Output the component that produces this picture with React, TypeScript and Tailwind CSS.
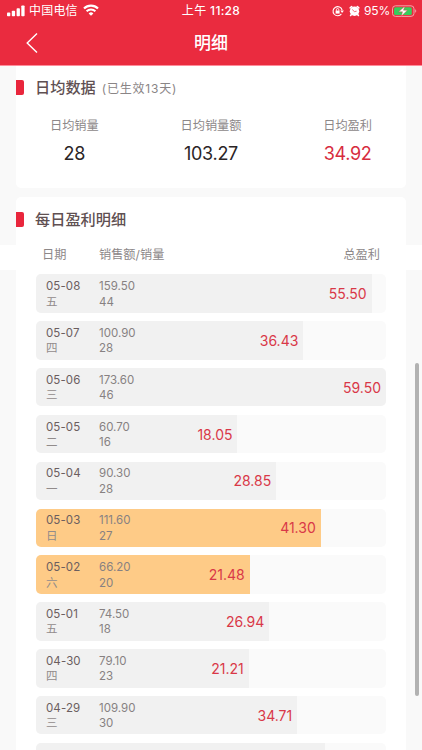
import clsx from "clsx";

type DayRow = {
  date: string;
  weekday: string;
  sales: string;
  count: number;
  profit: string;
  weekend?: boolean;
};

const days: DayRow[] = [
  { date: "05-08", weekday: "五", sales: "159.50", count: 44, profit: "55.50" },
  { date: "05-07", weekday: "四", sales: "100.90", count: 28, profit: "36.43" },
  { date: "05-06", weekday: "三", sales: "173.60", count: 46, profit: "59.50" },
  { date: "05-05", weekday: "二", sales: "60.70", count: 16, profit: "18.05" },
  { date: "05-04", weekday: "一", sales: "90.30", count: 28, profit: "28.85" },
  { date: "05-03", weekday: "日", sales: "111.60", count: 27, profit: "41.30", weekend: true },
  { date: "05-02", weekday: "六", sales: "66.20", count: 20, profit: "21.48", weekend: true },
  { date: "05-01", weekday: "五", sales: "74.50", count: 18, profit: "26.94" },
  { date: "04-30", weekday: "四", sales: "79.10", count: 23, profit: "21.21" },
  { date: "04-29", weekday: "三", sales: "109.90", count: 30, profit: "34.71" },
];

const summary = [
  { label: "日均销量", value: "28" },
  { label: "日均销量额", value: "103.27" },
  { label: "日均盈利", value: "34.92", red: true },
];

// the shortest bar still has to leave room for the date and sales columns
const barWidth = (profit: number) => 136.8 + profit * 3.583;

function StatusBar() {
  return (
    <div className="relative flex h-5 items-center justify-between pl-[7px] pr-[5px] text-[12px] leading-5">
      <div className="flex h-5 items-center">
        <svg className="mt-px" width="18" height="12" viewBox="0 0 18 12" fill="#fff">
          <rect x="0" y="7.6" width="3.3" height="3.6" rx="0.8" />
          <rect x="4.8" y="5.8" width="3.3" height="5.4" rx="0.8" />
          <rect x="9.6" y="3.3" width="3.3" height="7.9" rx="0.8" />
          <rect x="14.3" y="0.4" width="3.3" height="10.8" rx="0.8" />
        </svg>
        <span className="ml-[4px] mt-[2px] tracking-[0.2px]">中国电信</span>
        <svg className="ml-[5px]" width="16" height="12" viewBox="0 0 16 12" fill="none" stroke="#fff">
          <path d="M1 4.5a10 10 0 0 1 14 0" strokeWidth="2.2" />
          <path d="M3.6 7.3a6.3 6.3 0 0 1 8.8 0" strokeWidth="2" />
          <path d="M8 11.8 5.6 9.4a3.4 3.4 0 0 1 4.8 0Z" fill="#fff" stroke="none" />
        </svg>
      </div>
      <div className="absolute inset-x-0 top-px text-center tracking-[0.3px]">
        上午 <span className="font-medium">11:28</span>
      </div>
      <div className="flex h-5 items-center">
        <svg className="mt-px" width="12" height="12" viewBox="0 0 12 12" fill="none" stroke="#fff">
          <path d="M9.4 8.9A4.6 4.6 0 1 1 10.1 5" strokeWidth="1.1" />
          <path d="M8.3 5.4h3.6L10.1 8Z" fill="#fff" stroke="none" />
          <rect x="3.6" y="5.6" width="4" height="3" fill="#fff" stroke="none" />
          <path d="M4.4 5.8V4.7a1.2 1.2 0 0 1 2.4 0v1.1" strokeWidth="0.9" />
        </svg>
        <svg className="ml-[5px] mt-px" width="11" height="12" viewBox="0 0 11 12">
          <circle cx="5.5" cy="6.2" r="4.7" fill="#fff" />
          <path d="M1.2 2.9 2.7 1.5M9.8 2.9 8.3 1.5M2.2 9.7l-.6.8M8.8 9.7l.6.8" stroke="#fff" strokeWidth="1.6" strokeLinecap="round" />
          <path d="M3.2 4.5 5.4 6.6 7.6 6.2" stroke="#ea2b3f" strokeWidth="0.7" fill="none" />
        </svg>
        <span className="ml-[4px] mt-[2px] tracking-[-0.2px]">95%</span>
        <svg className="ml-[2px] mt-px" width="25" height="12" viewBox="0 0 25 12">
          <rect x="0.5" y="0.8" width="21.5" height="10.6" rx="3" fill="none" stroke="#f7a0a9" />
          <rect x="2" y="2.3" width="17.8" height="7.6" rx="1.5" fill="#37cd5c" />
          <path d="M23.2 4.3v3.4c1.4-.6 1.4-2.8 0-3.4Z" fill="#f7a0a9" />
          <path d="M12.8 1.2 6.6 6.8h3.9L9.3 11.2l6.1-6h-3.9Z" fill="#fff" stroke="#ea2b3f" strokeWidth="0.4" />
        </svg>
      </div>
    </div>
  );
}

function SectionTitle({ title, note }: { title: string; note?: string }) {
  return (
    <div className="flex h-[22px] items-center">
      <span className="h-[15px] w-2 rounded-r-[2px] bg-[#e9263c]" />
      <h2 className="ml-[11px] mt-px text-[15.2px] font-medium leading-[22px] text-[#5f5052]">{title}</h2>
      {note && (
        <span className="ml-[6px] mt-[4px] text-[12px] tracking-[0.8px] text-[#8a8586]">{note}</span>
      )}
    </div>
  );
}

function ProfitRow({ day }: { day: DayRow }) {
  return (
    <div className="h-[38.5px] shrink-0 overflow-hidden rounded-[5px] bg-[#fafafa]">
      <div
        className={clsx(
          "flex h-full items-center pl-[10px] pr-[5px]",
          day.weekend ? "bg-[#fecb87]" : "bg-[#f1f1f1]"
        )}
        style={{ width: barWidth(Number(day.profit)) }}
      >
        <div className="w-[53px] pt-[2px] text-[11.5px] leading-[15.5px]">
          <p className="tracking-[0.1px] text-[#6b5e5f]">{day.date}</p>
          <p className="text-[#918b8b]">{day.weekday}</p>
        </div>
        <div className="pt-[2px] text-[11.5px] leading-[15.5px] text-[#878182]">
          <p>{day.sales}</p>
          <p>{day.count}</p>
        </div>
        <span className="ml-auto text-[14px] text-[#d93848]">{day.profit}</span>
      </div>
    </div>
  );
}

export default function App() {
  return (
    <div className="relative h-[750px] w-[422px] overflow-hidden bg-[#f9f9f9] font-['Inter','Noto_Sans_CJK_SC',sans-serif]">
      <header className="h-[66px] border-b border-[#ff8c9b] bg-[#ea2b3f] text-white">
        <StatusBar />
        <div className="grid h-[45px] grid-cols-[1fr_auto_1fr] items-center">
          <svg className="ml-[26px]" width="12" height="20" viewBox="0 0 12 20" fill="none" stroke="#fff" strokeWidth="1.4">
            <path d="M11 .6 1.2 10 11 19.4" />
          </svg>
          <h1 className="pt-[3px] text-[17px] font-medium">明细</h1>
        </div>
      </header>

      <section className="mx-[16px] h-[122px] rounded-b-[5px] bg-white pt-[10px]">
        <SectionTitle title="日均数据" note="(已生效13天)" />
        <div className="mx-[34px] mt-[19px] flex justify-between">
          {summary.map(({ label, value, red }) => (
            <div key={label} className="flex flex-col items-center">
              <span className="text-[12.2px] leading-[18px] text-[#8d8889]">{label}</span>
              <span
                className={clsx(
                  "mt-[7px] text-[18px] leading-[24px] tracking-[-0.3px]",
                  red ? "text-[#d72c3e]" : "text-[#2b2526]"
                )}
              >
                {value}
              </span>
            </div>
          ))}
        </div>
      </section>

      <section className="mx-[16px] mt-[9px] h-[47.5px] rounded-t-[5px] bg-white pt-[11px]">
        <SectionTitle title="每日盈利明细" />
      </section>
      <div className="flex h-[25.5px] items-center bg-white px-[42px] pb-[4px] text-[12.2px] leading-[18px] text-[#8d8889]">
        <span className="w-[57px]">日期</span>
        <span>销售额/销量</span>
        <span className="ml-auto">总盈利</span>
      </div>
      <div className="mx-[16px] flex h-[480px] flex-col gap-[8.35px] overflow-hidden bg-white px-[20px] pt-[4.3px]">
        {days.map((day) => (
          <ProfitRow key={day.date} day={day} />
        ))}
        <div className="h-[38.5px] shrink-0 overflow-hidden rounded-[5px] bg-[#fafafa]">
          <div className="h-full bg-[#f1f1f1]" style={{ width: barWidth(42.6) }} />
        </div>
      </div>

      <div className="absolute left-[415px] top-[363px] h-[333px] w-[4px] rounded-full bg-[#b2b2b2]" />
    </div>
  );
}
